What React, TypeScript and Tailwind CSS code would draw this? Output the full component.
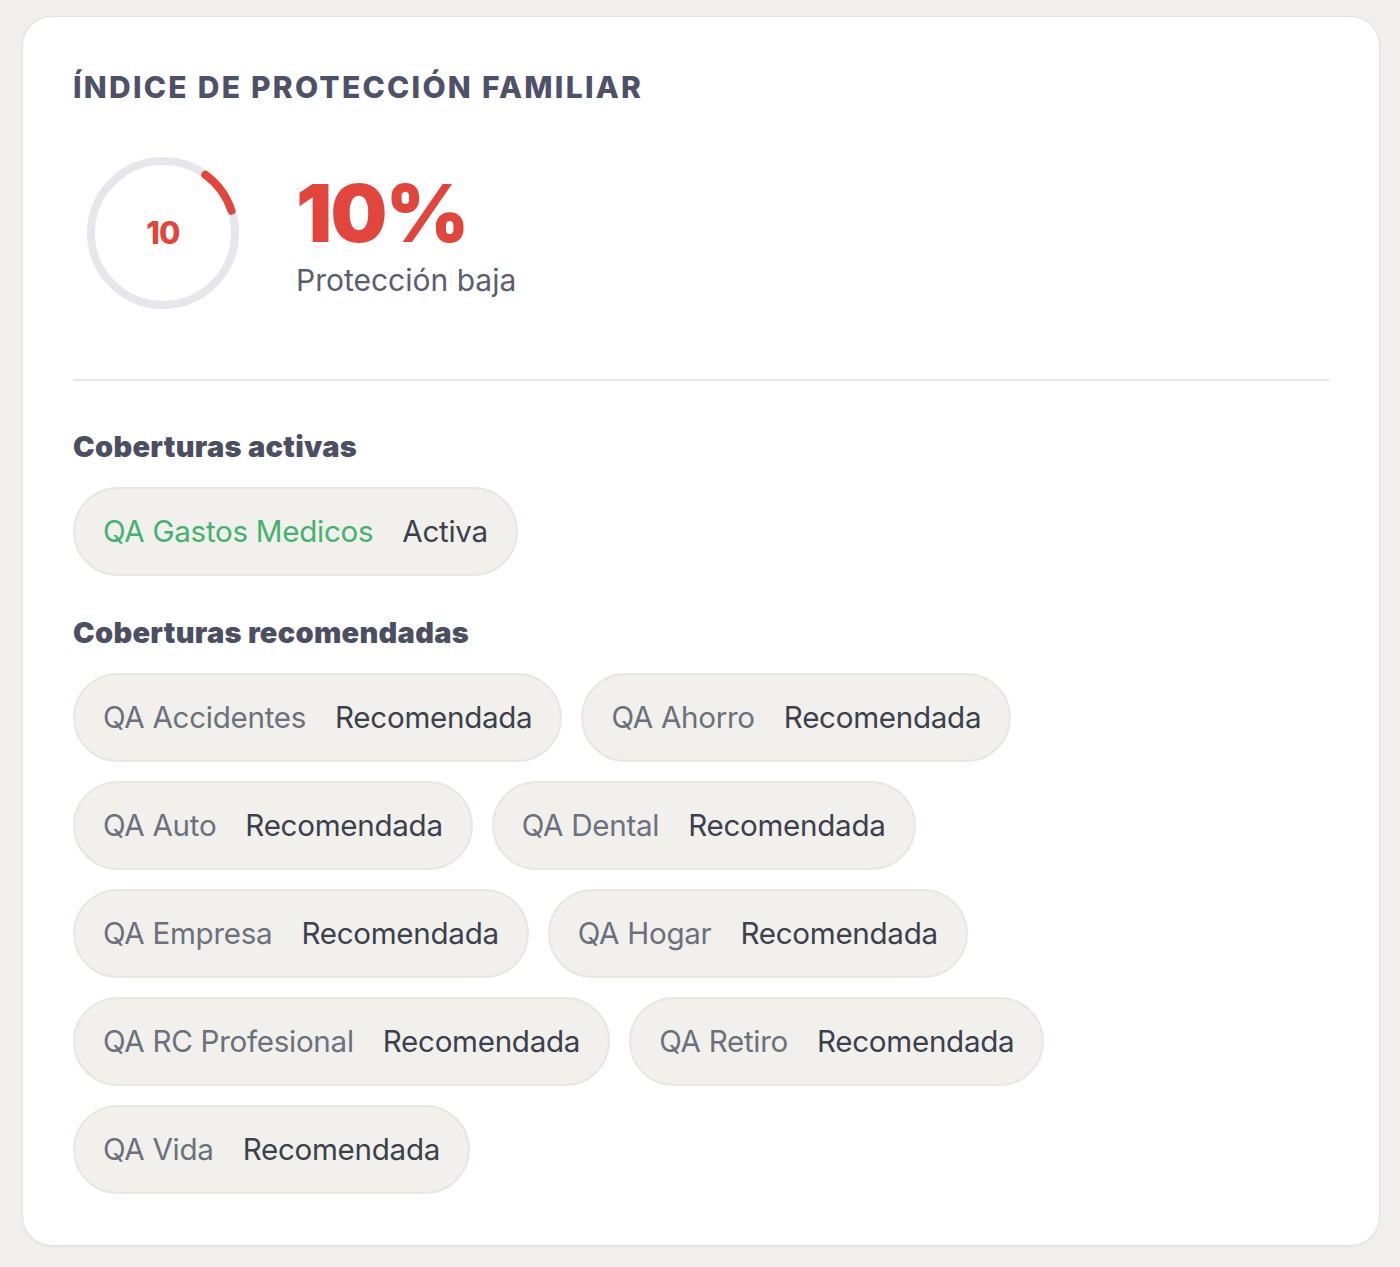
import React from "react";

type Coverage = { name: string; status: string };

const active: Coverage[] = [{ name: "QA Gastos Medicos", status: "Activa" }];

const recommended: Coverage[] = [
  { name: "QA Accidentes", status: "Recomendada" },
  { name: "QA Ahorro", status: "Recomendada" },
  { name: "QA Auto", status: "Recomendada" },
  { name: "QA Dental", status: "Recomendada" },
  { name: "QA Empresa", status: "Recomendada" },
  { name: "QA Hogar", status: "Recomendada" },
  { name: "QA RC Profesional", status: "Recomendada" },
  { name: "QA Retiro", status: "Recomendada" },
  { name: "QA Vida", status: "Recomendada" },
];

function ScoreRing({ value }: { value: number }) {
  const r = 72;
  const c = 2 * Math.PI * r;
  const dash = (value / 100) * c;
  return (
    <div className="relative h-[160px] w-[160px] shrink-0">
      <svg width="160" height="160" viewBox="0 0 160 160">
        <circle cx="80" cy="80" r={r} fill="none" stroke="#e6e6ec" strokeWidth="8" />
        <circle
          cx="80"
          cy="80"
          r={r}
          fill="none"
          stroke="#e0463d"
          strokeWidth="8"
          strokeLinecap="round"
          strokeDasharray={`${dash} ${c}`}
          transform="rotate(-54 80 80)"
        />
      </svg>
      <span className="absolute inset-0 flex items-center justify-center text-[31px] font-extrabold tracking-tight text-[#e0463d]">
        {value}
      </span>
    </div>
  );
}

function Chip({ item, active }: { item: Coverage; active?: boolean }) {
  return (
    <div className="flex h-[89px] items-center gap-[29px] rounded-full border-2 border-[#e7e6e2] bg-[#f1f0ec] px-[28px] text-[29.6px] tracking-[-0.01em]">
      <span className={active ? "text-[#45b06f]" : "text-[#6c707c]"}>{item.name}</span>
      <span className="text-[#3c3f4c]">{item.status}</span>
    </div>
  );
}

export default function App() {
  return (
    <div className="min-h-screen bg-[#f0efeb] pl-[22px] pr-5 pt-4 pb-5 font-['Inter',sans-serif]">
      <section className="rounded-[30px] border border-[#e3e3e6] bg-white px-[50px] pt-[55px] pb-[51px] shadow-[0_1px_3px_rgba(0,0,0,0.05)]">
        <h1 className="text-[30px] font-extrabold uppercase leading-none tracking-[0.075em] text-[#4f5168]">
          Índice de protección familiar
        </h1>

        <div className="mt-[51px] flex items-center gap-[53px] pl-[10px]">
          <ScoreRing value={10} />
          <div className="flex flex-col pt-[10px]">
            <span className="text-[80px] font-black leading-none tracking-[-0.02em] text-[#e0463d]">10%</span>
            <span className="mt-[5px] text-[30px] text-[#5a5e6e]">Protección baja</span>
          </div>
        </div>

        <div className="mt-[66px] h-[2px] bg-[#e8e8ec]" />

        <h2 className="mt-[44px] text-[29px] font-black tracking-[0.01em] text-[#4c4f62]">Coberturas activas</h2>
        <div className="mt-[18px] flex flex-wrap gap-[19px]">
          {active.map((c) => (
            <Chip key={c.name} item={c} active />
          ))}
        </div>

        <h2 className="mt-[35px] text-[29px] font-black tracking-[0.01em] text-[#4c4f62]">Coberturas recomendadas</h2>
        <div className="mt-[19px] flex flex-wrap gap-[19px]">
          {recommended.map((c) => (
            <Chip key={c.name} item={c} />
          ))}
        </div>
      </section>
    </div>
  );
}
